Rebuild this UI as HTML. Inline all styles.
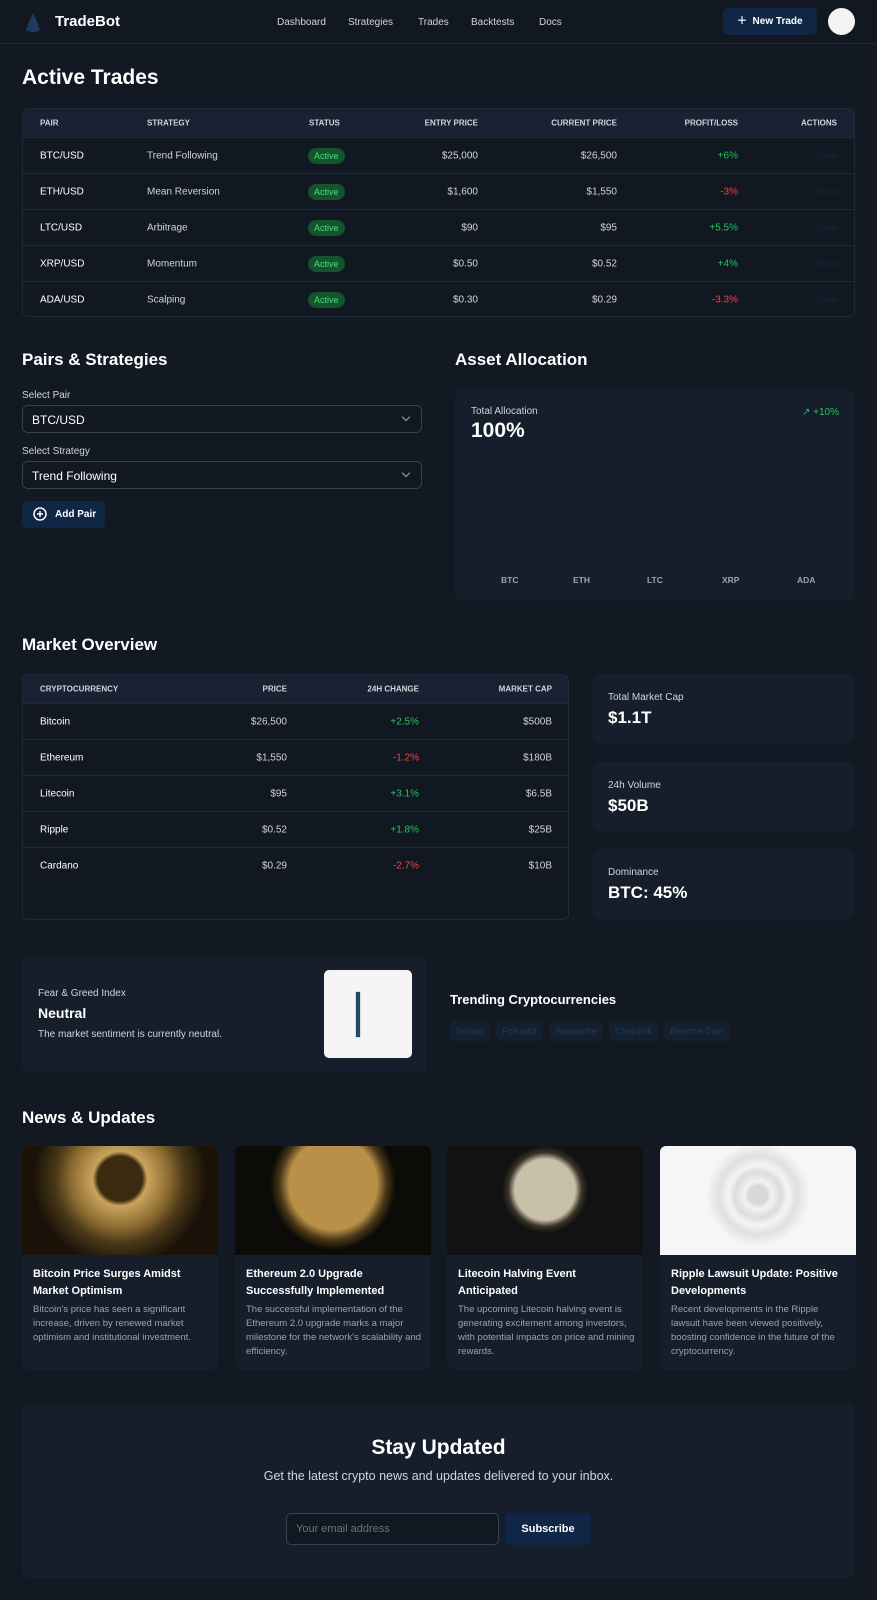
<!DOCTYPE html>
<html><head><meta charset="utf-8"><style>
*{box-sizing:border-box;margin:0;padding:0}
body{width:877px;height:1600px;background:#121922;font-family:"Liberation Sans",sans-serif;color:#fff;position:relative;overflow:hidden}
.a{position:absolute}
.nav{left:0;top:0;width:877px;height:44px;border-bottom:1px solid #1f2937;background:#111821}
.nl{font-size:10px;color:#d1d5db;top:17px}
h2{position:absolute;font-size:17px;font-weight:bold;left:22px}
.tbl{border:1px solid #1f2937;border-radius:6px;overflow:hidden;background:#111821}
.th{background:#182232;height:28px;position:relative;font-size:8px;font-weight:bold;color:#d1d5db}
.tr{height:36px;position:relative;border-top:1px solid #1f2937;font-size:10px;color:#d1d5db}
.tr span,.th span{position:absolute;top:50%;transform:translateY(-50%)}
.g{color:#22c55e}.red{color:#ef4444}
.badge{background:#14532d;color:#4ade80;font-size:9px;padding:3px 6px;border-radius:8px}
.card{background:#161e2b;border-radius:8px}
.lbl{font-size:10px;color:#d1d5db}
.sel{border:1px solid #374151;border-radius:6px;height:28px;font-size:12px;padding:7px 9px;color:#fff;background:#111821}
.chev{position:absolute;right:12px;top:8px;width:6px;height:6px;border-right:1px solid #9ca3af;border-bottom:1px solid #9ca3af;transform:rotate(45deg)}
.sc .t{font-size:10px;color:#d1d5db;position:absolute;left:16px;top:18px}
.sc .v{font-size:17px;font-weight:bold;position:absolute;left:16px;top:34px}
.news .img{height:109px;border-radius:6px 6px 0 0}
.news .tt{position:absolute;left:11px;top:120px;font-size:11px;font-weight:bold;line-height:17px;width:175px}
.news .d{position:absolute;left:11px;top:157px;font-size:9.5px;color:#9ca3af;line-height:14px;width:178px}
.tag{display:inline-block;background:#15202e;color:#1e3a5f;font-size:9px;padding:5px 6px;border-radius:4px;margin-right:6px}
</style></head><body>
<div class="a nav">
 <svg class="a" style="left:23px;top:12px" width="20" height="21" viewBox="0 0 20 21"><path d="M10 1 L16 14 A7 5 0 0 1 4 14 Z" fill="#1e3a5f"/><ellipse cx="10" cy="17" rx="7" ry="3" fill="#1e3a5f"/></svg>
 <div class="a" style="left:55px;top:13px;font-size:15px;font-weight:bold">TradeBot</div>
 <div class="a nl" style="left:277px">Dashboard</div>
 <div class="a nl" style="left:348px">Strategies</div>
 <div class="a nl" style="left:418px">Trades</div>
 <div class="a nl" style="left:471px">Backtests</div>
 <div class="a nl" style="left:539px">Docs</div>
 <div class="a" style="left:723px;top:8px;width:94px;height:27px;background:#0f2744;border-radius:5px;font-size:10px;font-weight:bold;padding:8px 0 0 14px;line-height:11px">＋&nbsp; New Trade</div>
 <div class="a" style="left:828px;top:8px;width:27px;height:27px;border-radius:50%;background:#f3f4f1"></div>
</div>

<h2 style="top:66px;font-size:21px">Active Trades</h2>
<div class="a tbl" style="left:22px;top:108px;width:833px;height:209px">
 <div class="th"><span style="left:17px">PAIR</span><span style="left:124px">STRATEGY</span><span style="left:286px">STATUS</span><span style="right:376px">ENTRY PRICE</span><span style="right:237px">CURRENT PRICE</span><span style="right:116px">PROFIT/LOSS</span><span style="right:17px">ACTIONS</span></div>
 <div class="tr"><span style="left:17px;color:#fff">BTC/USD</span><span style="left:124px">Trend Following</span><span style="left:285px" class="badge">Active</span><span style="right:376px">$25,000</span><span style="right:237px">$26,500</span><span style="right:116px" class="g">+6%</span><span style="right:17px;color:#16263a">View</span></div>
 <div class="tr"><span style="left:17px;color:#fff">ETH/USD</span><span style="left:124px">Mean Reversion</span><span style="left:285px" class="badge">Active</span><span style="right:376px">$1,600</span><span style="right:237px">$1,550</span><span style="right:116px" class="red">-3%</span><span style="right:17px;color:#16263a">View</span></div>
 <div class="tr"><span style="left:17px;color:#fff">LTC/USD</span><span style="left:124px">Arbitrage</span><span style="left:285px" class="badge">Active</span><span style="right:376px">$90</span><span style="right:237px">$95</span><span style="right:116px" class="g">+5.5%</span><span style="right:17px;color:#16263a">View</span></div>
 <div class="tr"><span style="left:17px;color:#fff">XRP/USD</span><span style="left:124px">Momentum</span><span style="left:285px" class="badge">Active</span><span style="right:376px">$0.50</span><span style="right:237px">$0.52</span><span style="right:116px" class="g">+4%</span><span style="right:17px;color:#16263a">View</span></div>
 <div class="tr"><span style="left:17px;color:#fff">ADA/USD</span><span style="left:124px">Scalping</span><span style="left:285px" class="badge">Active</span><span style="right:376px">$0.30</span><span style="right:237px">$0.29</span><span style="right:116px" class="red">-3.3%</span><span style="right:17px;color:#16263a">View</span></div>
</div>

<h2 style="top:350px">Pairs &amp; Strategies</h2>
<div class="a lbl" style="left:22px;top:390px">Select Pair</div>
<div class="a sel" style="left:22px;top:405px;width:400px">BTC/USD<div class="chev"></div></div>
<div class="a lbl" style="left:22px;top:446px">Select Strategy</div>
<div class="a sel" style="left:22px;top:461px;width:400px">Trend Following<div class="chev"></div></div>
<div class="a" style="left:22px;top:501px;width:83px;height:27px;background:#0f2744;border-radius:5px;font-size:10px;font-weight:bold;padding:9px 0 0 33px;line-height:10px">Add Pair</div>
<svg class="a" style="left:33px;top:507px" width="14" height="14" viewBox="0 0 14 14"><circle cx="7" cy="7" r="6" fill="none" stroke="#fff" stroke-width="1.5"/><path d="M7 4v6M4 7h6" stroke="#fff" stroke-width="1.5"/></svg>

<h2 style="left:455px;top:350px">Asset Allocation</h2>
<div class="a card" style="left:455px;top:389px;width:400px;height:212px">
 <div class="a lbl" style="left:16px;top:17px">Total Allocation</div>
 <div class="a" style="left:16px;top:30px;font-size:21px;font-weight:bold">100%</div>
 <div class="a g" style="right:16px;top:18px;font-size:10px">↗ +10%</div>
 <div class="a" style="left:46px;top:186px;font-size:8.5px;font-weight:bold;color:#9ca3af">BTC</div>
 <div class="a" style="left:118px;top:186px;font-size:8.5px;font-weight:bold;color:#9ca3af">ETH</div>
 <div class="a" style="left:192px;top:186px;font-size:8.5px;font-weight:bold;color:#9ca3af">LTC</div>
 <div class="a" style="left:267px;top:186px;font-size:8.5px;font-weight:bold;color:#9ca3af">XRP</div>
 <div class="a" style="left:342px;top:186px;font-size:8.5px;font-weight:bold;color:#9ca3af">ADA</div>
</div>

<h2 style="top:635px">Market Overview</h2>
<div class="a tbl" style="left:22px;top:674px;width:547px;height:246px">
 <div class="th"><span style="left:17px">CRYPTOCURRENCY</span><span style="right:281px">PRICE</span><span style="right:149px">24H CHANGE</span><span style="right:16px">MARKET CAP</span></div>
 <div class="tr"><span style="left:17px;color:#fff">Bitcoin</span><span style="right:281px">$26,500</span><span style="right:149px" class="g">+2.5%</span><span style="right:16px">$500B</span></div>
 <div class="tr"><span style="left:17px;color:#fff">Ethereum</span><span style="right:281px">$1,550</span><span style="right:149px" class="red">-1.2%</span><span style="right:16px">$180B</span></div>
 <div class="tr"><span style="left:17px;color:#fff">Litecoin</span><span style="right:281px">$95</span><span style="right:149px" class="g">+3.1%</span><span style="right:16px">$6.5B</span></div>
 <div class="tr"><span style="left:17px;color:#fff">Ripple</span><span style="right:281px">$0.52</span><span style="right:149px" class="g">+1.8%</span><span style="right:16px">$25B</span></div>
 <div class="tr"><span style="left:17px;color:#fff">Cardano</span><span style="right:281px">$0.29</span><span style="right:149px" class="red">-2.7%</span><span style="right:16px">$10B</span></div>
</div>
<div class="a card sc" style="left:592px;top:674px;width:263px;height:70px"><div class="t">Total Market Cap</div><div class="v">$1.1T</div></div>
<div class="a card sc" style="left:592px;top:762px;width:263px;height:70px"><div class="t">24h Volume</div><div class="v">$50B</div></div>
<div class="a card sc" style="left:592px;top:849px;width:263px;height:71px"><div class="t">Dominance</div><div class="v">BTC: 45%</div></div>

<div class="a card" style="left:22px;top:955px;width:405px;height:118px">
 <div class="a lbl" style="left:16px;top:33px">Fear &amp; Greed Index</div>
 <div class="a" style="left:16px;top:50px;font-size:14px;font-weight:bold">Neutral</div>
 <div class="a" style="left:16px;top:74px;font-size:10px;color:#d1d5db">The market sentiment is currently neutral.</div>
 <div class="a" style="left:302px;top:15px;width:88px;height:88px;background:#f4f5f4;border-radius:5px">
  <div class="a" style="left:31px;top:21px;width:6px;height:47px;background:#1f4b6b;border:1px solid #ddd"></div>
 </div>
</div>
<div class="a" style="left:450px;top:992px;font-size:13px;font-weight:bold">Trending Cryptocurrencies</div>
<div class="a" style="left:450px;top:1021px;white-space:nowrap"><span class="tag">Solana</span><span class="tag">Polkadot</span><span class="tag">Avalanche</span><span class="tag">Chainlink</span><span class="tag">Binance Coin</span></div>

<h2 style="top:1108px">News &amp; Updates</h2>
<div class="a card news" style="left:22px;top:1146px;width:196px;height:224px"><div class="img" style="background:radial-gradient(circle at 50% 30%,#3a2a10 0 18%,#c9a45c 22%,#8a6a30 40%,#4a3818 52%,#1a1208 70%)"></div><div class="tt">Bitcoin Price Surges Amidst Market Optimism</div><div class="d">Bitcoin's price has seen a significant increase, driven by renewed market optimism and institutional investment.</div></div>
<div class="a card news" style="left:235px;top:1146px;width:196px;height:224px"><div class="img" style="background:radial-gradient(ellipse 32% 60% at 50% 35%,#b89048 0 70%,#4a3818 85%,#0c0b08 100%)"></div><div class="tt">Ethereum 2.0 Upgrade Successfully Implemented</div><div class="d">The successful implementation of the Ethereum 2.0 upgrade marks a major milestone for the network's scalability and efficiency.</div></div>
<div class="a card news" style="left:447px;top:1146px;width:196px;height:224px"><div class="img" style="background:radial-gradient(ellipse 22% 40% at 50% 40%,#c8c0a8 0 70%,#3a3428 85%,#121212 100%)"></div><div class="tt">Litecoin Halving Event Anticipated</div><div class="d">The upcoming Litecoin halving event is generating excitement among investors, with potential impacts on price and mining rewards.</div></div>
<div class="a card news" style="left:660px;top:1146px;width:196px;height:224px"><div class="img" style="background:radial-gradient(circle at 50% 45%,#d8d8d8 0 8%,#f2f2f2 12%,#dcdcdc 20%,#f4f4f4 26%,#e0e0e0 34%,#f6f6f6 45%)"></div><div class="tt">Ripple Lawsuit Update: Positive Developments</div><div class="d">Recent developments in the Ripple lawsuit have been viewed positively, boosting confidence in the future of the cryptocurrency.</div></div>

<div class="a card" style="left:22px;top:1404px;width:833px;height:174px;text-align:center">
 <div style="margin-top:32px;font-size:21px;font-weight:bold">Stay Updated</div>
 <div style="margin-top:9px;font-size:12.5px;color:#d1d5db">Get the latest crypto news and updates delivered to your inbox.</div>
 <div class="a" style="left:264px;top:109px;width:213px;height:32px;border:1px solid #374151;border-radius:5px;background:#111821;font-size:11px;color:#6b7280;text-align:left;padding:9px 9px">Your email address</div>
 <div class="a" style="left:483px;top:109px;width:86px;height:32px;border-radius:5px;background:#0f2744;font-size:11px;font-weight:bold;padding-top:10px">Subscribe</div>
</div>
</body></html>
